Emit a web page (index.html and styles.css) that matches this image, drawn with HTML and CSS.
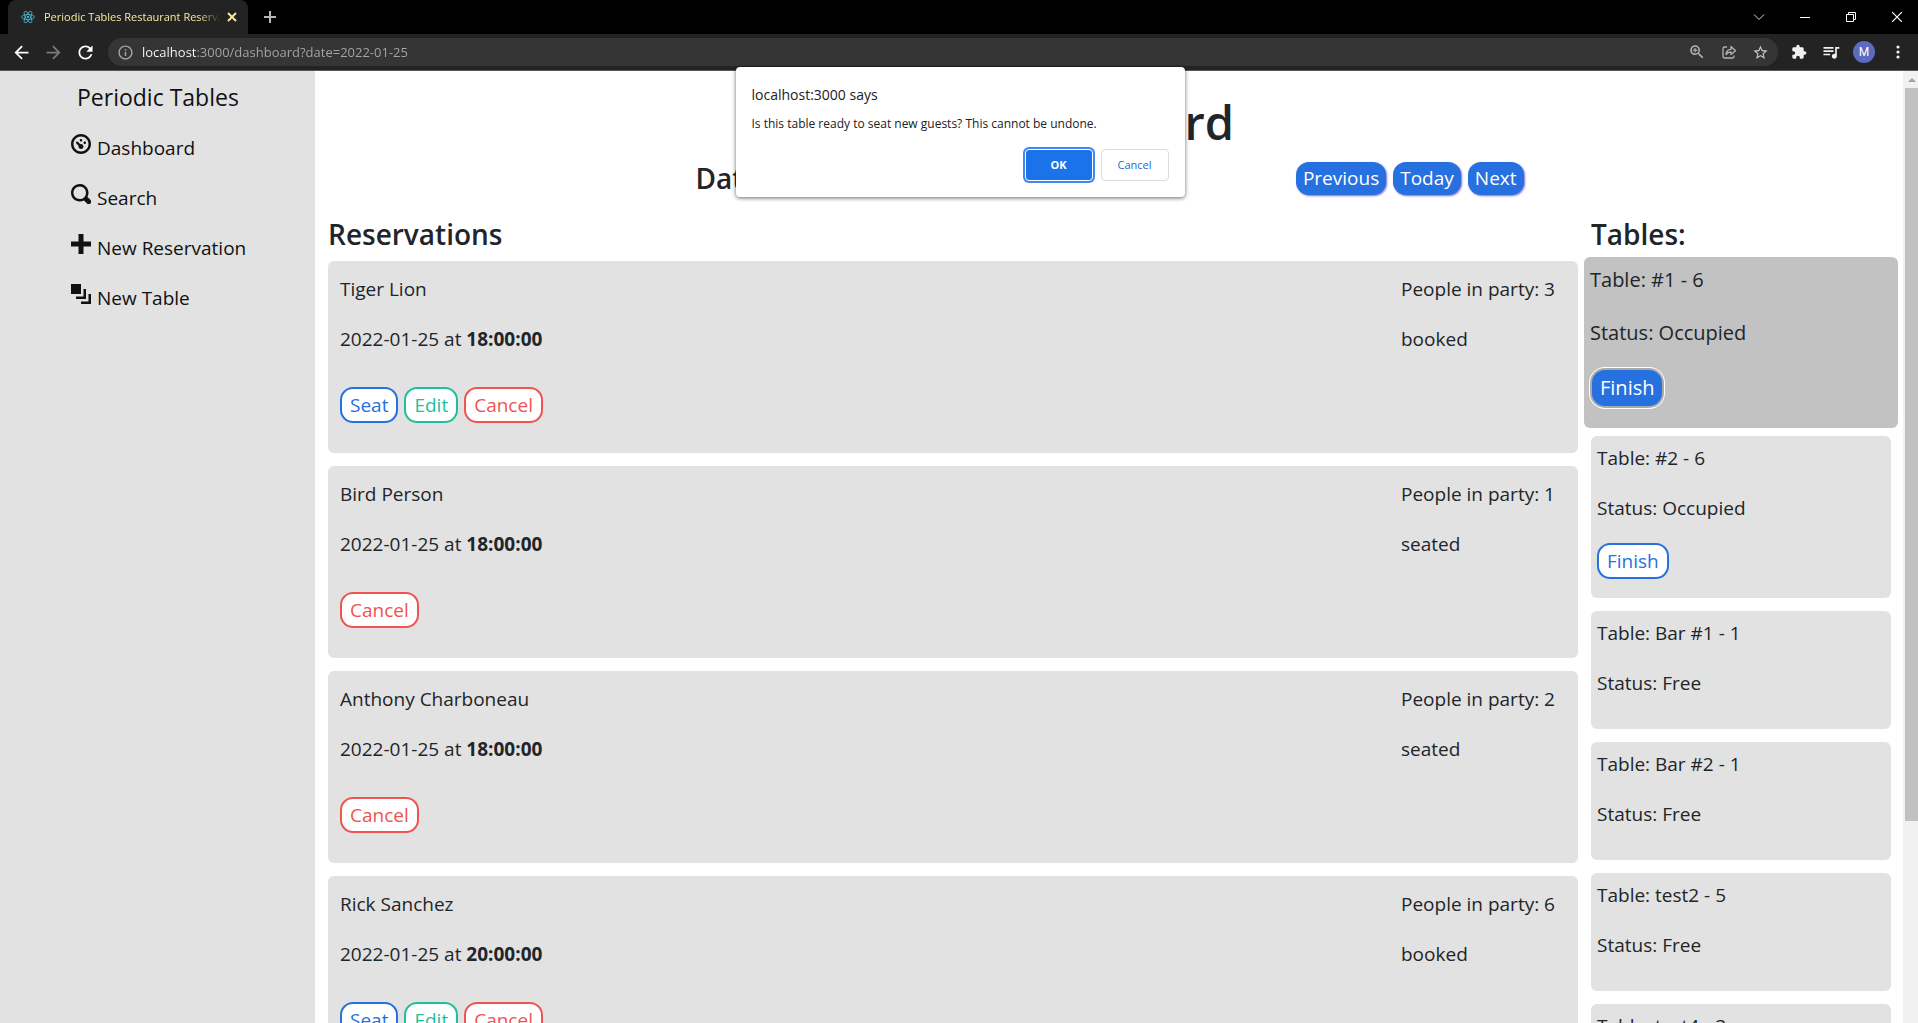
FILE: index.html
```html
<!DOCTYPE html>
<html lang="en">
<head>
<meta charset="utf-8">
<title>Periodic Tables Restaurant Reservation</title>
<link rel="stylesheet" href="styles.css">
</head>
<body>
<header class="browser">
  <div class="tabstrip">
    <div class="tab">
      <svg class="react" viewBox="0 0 24 24" fill="none" stroke="#4db8d4" stroke-width="1.4"><ellipse cx="12" cy="12" rx="11" ry="4.3"/><ellipse cx="12" cy="12" rx="11" ry="4.3" transform="rotate(60 12 12)"/><ellipse cx="12" cy="12" rx="11" ry="4.3" transform="rotate(120 12 12)"/><circle cx="12" cy="12" r="2" fill="#4db8d4" stroke="none"/></svg>
      <span class="tab-title">Periodic Tables Restaurant Reservation</span>
      <button class="icon-btn tab-close" aria-label="Close tab"><svg viewBox="0 0 10 10" width="10" height="10" fill="none" stroke="#f5ea9c" stroke-width="2"><path d="M1 1l8 8M9 1l-8 8"/></svg></button>
    </div>
    <button class="icon-btn new-tab" aria-label="New tab"><svg viewBox="0 0 12 12" width="12" height="12" fill="none" stroke="#b4b7ba" stroke-width="2"><path d="M6 0v12M0 6h12"/></svg></button>
    <div class="window-controls">
      <button class="icon-btn" aria-label="Search tabs"><svg viewBox="0 0 12 12" width="12" height="12" fill="none" stroke="#ddd"><path d="M1 3.500l5 5 5-5"/></svg></button>
      <button class="icon-btn" aria-label="Minimize"><svg viewBox="0 0 10 10" width="10" height="10" stroke="#fff"><path d="M0 5.500h10"/></svg></button>
      <button class="icon-btn" aria-label="Restore"><svg viewBox="0 0 10 10" width="10" height="10" fill="none" stroke="#fff"><path d="M.5 2.500h7v7h-7zM2.500 2.500v-2h7v7h-2"/></svg></button>
      <button class="icon-btn" aria-label="Close"><svg viewBox="0 0 10 10" width="10" height="10" stroke="#fff" stroke-width="1.200"><path d="M0 0l10 10M10 0L0 10"/></svg></button>
    </div>
  </div>
  <div class="toolbar">
    <button class="icon-btn" aria-label="Back"><svg viewBox="0 0 24 24" width="21" height="21" fill="#fff"><path d="M20 11H7.830l5.590-5.590L12 4l-8 8 8 8 1.410-1.410L7.830 13H20v-2z"/></svg></button>
    <button class="icon-btn" aria-label="Forward"><svg viewBox="0 0 24 24" width="21" height="21" fill="#7b7b7b"><path d="M12 4l-1.410 1.410L16.170 11H4v2h12.170l-5.580 5.590L12 20l8-8z"/></svg></button>
    <button class="icon-btn" aria-label="Reload"><svg viewBox="0 0 24 24" width="21" height="21" fill="#fff"><path d="M17.650 6.350C16.200 4.900 14.210 4 12 4c-4.420 0-7.990 3.580-7.990 8s3.570 8 7.990 8c3.730 0 6.840-2.550 7.730-6h-2.080c-.82 2.330-3.040 4-5.650 4-3.310 0-6-2.690-6-6s2.690-6 6-6c1.660 0 3.140.69 4.220 1.780L13 11h7V4l-2.350 2.350z"/></svg></button>
    <div class="omnibox">
      <svg viewBox="0 0 24 24" width="17" height="17" fill="#a4a7aa"><path d="M11 7h2v2h-2zm0 4h2v6h-2zm1-9C6.480 2 2 6.480 2 12s4.480 10 10 10 10-4.480 10-10S17.520 2 12 2zm0 18c-4.410 0-8-3.590-8-8s3.590-8 8-8 8 3.590 8 8-3.590 8-8 8z"/></svg>
      <input class="url" type="text" aria-label="Address" value="localhost:3000/dashboard?date=2022-01-25">
      <button class="icon-btn" aria-label="Zoom"><svg viewBox="0 0 24 24" width="18" height="18" fill="#b4b4b4"><path d="M15.500 14h-.79l-.28-.27C15.410 12.590 16 11.110 16 9.500 16 5.910 13.090 3 9.500 3S3 5.910 3 9.500 5.910 16 9.500 16c1.610 0 3.090-.59 4.230-1.570l.27.28v.79l5 4.990L20.490 19l-4.990-5zm-6 0C7.010 14 5 11.990 5 9.500S7.010 5 9.500 5 14 7.010 14 9.500 11.990 14 9.500 14zM10.200 6.500H8.800v2.300H6.500v1.400h2.300v2.300h1.400v-2.300h2.300V8.800h-2.300z"/></svg></button>
      <button class="icon-btn" aria-label="Share"><svg viewBox="0 0 16 16" width="16" height="16" fill="none" stroke="#b4b4b4" stroke-width="1.300" stroke-linejoin="round"><path d="M6 3H3.500Q2 3 2 4.500V12.500Q2 14 3.500 14H11.500Q13 14 13 12.500V11.500M5 10.500Q5.500 5.500 10 5.300V2.500L14.500 6.800L10 10.500V8Q7 8 5 10.500z"/></svg></button>
      <button class="icon-btn" aria-label="Bookmark"><svg viewBox="0 0 24 24" width="17" height="17" fill="#c8c8c8"><path d="M22 9.240l-7.190-.62L12 2 9.190 8.630 2 9.240l5.460 4.730L5.820 21 12 17.270 18.180 21l-1.630-7.030L22 9.240zM12 15.400l-3.760 2.270 1-4.280-3.320-2.880 4.380-.38L12 6.100l1.710 4.040 4.380.38-3.320 2.880 1 4.280L12 15.400z"/></svg></button>
    </div>
    <div class="extensions">
      <button class="icon-btn" aria-label="Extensions"><svg viewBox="0 0 24 24" width="16" height="16" fill="#f1f1f1"><path d="M20.500 11H19V7c0-1.100-.9-2-2-2h-4V3.500C13 2.120 11.880 1 10.500 1S8 2.120 8 3.500V5H4c-1.100 0-1.990.9-1.990 2v3.800H3.500c1.490 0 2.700 1.210 2.700 2.700s-1.210 2.700-2.700 2.700H2V20c0 1.100.9 2 2 2h3.800v-1.500c0-1.490 1.210-2.700 2.700-2.700 1.490 0 2.700 1.210 2.700 2.700V22H17c1.100 0 2-.9 2-2v-4h1.500c1.380 0 2.500-1.120 2.500-2.500S21.880 11 20.500 11z"/></svg></button>
      <button class="icon-btn" aria-label="Media"><svg viewBox="0 0 24 24" width="20" height="20" fill="#f1f1f1"><path d="M15 6H3v2h12V6zm0 4H3v2h12v-2zM3 16h8v-2H3v2zM17 6v8.180c-.31-.11-.65-.18-1-.18-1.660 0-3 1.340-3 3s1.340 3 3 3 3-1.340 3-3V8h3V6h-5z"/></svg></button>
      <button class="icon-btn avatar" aria-label="Profile">M</button>
      <button class="icon-btn" aria-label="Menu"><svg viewBox="0 0 4 14" width="4" height="14" fill="#f1f1f1"><circle cx="2" cy="2" r="1.600"/><circle cx="2" cy="7" r="1.600"/><circle cx="2" cy="12" r="1.600"/></svg></button>
    </div>
  </div>
</header>

<div class="page">
  <nav class="sidebar">
    <a class="brand" href="#">Periodic Tables</a>
    <ul class="menu">
      <li><a href="#"><svg class="oi" viewBox="0 0 8 8"><path d="M4 0c-2.200 0-4 1.800-4 4s1.800 4 4 4 4-1.800 4-4-1.800-4-4-4zm0 1c1.660 0 3 1.340 3 3s-1.340 3-3 3-3-1.340-3-3 1.340-3 3-3zm0 1c-.28 0-.5.22-.5.5s.22.5.5.5.5-.22.5-.5-.22-.5-.5-.5zm-1.660 1a.5.5 0 0 0-.19.84l.91.91c-.02.08-.06.16-.06.25 0 .55.45 1 1 1s1-.45 1-1-.45-1-1-1c-.09 0-.17.04-.25.06l-.91-.91a.5.5 0 0 0-.44-.16.5.5 0 0 0-.06 0zm3.160 0c-.28 0-.5.22-.5.5s.22.5.5.5.5-.22.5-.5-.22-.5-.5-.5z"/></svg><span>Dashboard</span></a></li>
      <li><a href="#"><svg class="oi" viewBox="0 0 8 8"><path d="M3.500 0c-1.930 0-3.500 1.570-3.500 3.500s1.570 3.500 3.500 3.500c.59 0 1.170-.14 1.660-.41a1 1 0 0 0 .13.13l1 1a1.020 1.020 0 1 0 1.440-1.440l-1-1a1 1 0 0 0-.16-.13c.27-.49.44-1.060.44-1.660 0-1.930-1.550-3.500-3.500-3.500zm0 1c1.390 0 2.500 1.110 2.500 2.500 0 .66-.24 1.270-.66 1.720-.01.01-.02.02-.03.03a1 1 0 0 0-.13.13c-.44.4-1.040.63-1.690.63-1.390 0-2.500-1.110-2.500-2.500s1.110-2.500 2.500-2.500z"/></svg><span>Search</span></a></li>
      <li><a href="#"><svg class="oi" viewBox="0 0 8 8"><path d="M3 0v3h-3v2h3v3h2v-3h3v-2h-3v-3h-2z"/></svg><span>New Reservation</span></a></li>
      <li><a href="#"><svg class="oi" viewBox="0 0 8 8"><path d="M0 0v4h4v-4h-4zm5 2v3h-3v1h4v-4h-1zm2 2v3h-3v1h4v-4h-1z"/></svg><span>New Table</span></a></li>
    </ul>
  </nav>

  <main class="content">
    <h1>Dashboard</h1>
    <div class="date-row">
      <h2>Date: 2022-01-25</h2>
      <div class="pager">
        <button class="nav-btn">Previous</button>
        <button class="nav-btn">Today</button>
        <button class="nav-btn">Next</button>
      </div>
    </div>
    <div class="columns">
      <section class="list">
        <h2>Reservations</h2>
        <article class="card reservation">
          <p>Tiger Lion</p><p>People in party: 3</p>
          <p>2022-01-25 at <b>18:00:00</b></p><p>booked</p>
          <div class="actions"><button class="btn blue">Seat</button><button class="btn green">Edit</button><button class="btn red">Cancel</button></div>
        </article>
        <article class="card reservation">
          <p>Bird Person</p><p>People in party: 1</p>
          <p>2022-01-25 at <b>18:00:00</b></p><p>seated</p>
          <div class="actions"><button class="btn red">Cancel</button></div>
        </article>
        <article class="card reservation">
          <p>Anthony Charboneau</p><p>People in party: 2</p>
          <p>2022-01-25 at <b>18:00:00</b></p><p>seated</p>
          <div class="actions"><button class="btn red">Cancel</button></div>
        </article>
        <article class="card reservation">
          <p>Rick Sanchez</p><p>People in party: 6</p>
          <p>2022-01-25 at <b>20:00:00</b></p><p>booked</p>
          <div class="actions"><button class="btn blue">Seat</button><button class="btn green">Edit</button><button class="btn red">Cancel</button></div>
        </article>
      </section>
      <section class="list">
        <h2>Tables:</h2>
        <article class="card table-card active">
          <p>Table: #1 - 6</p><p>Status: Occupied</p>
          <button class="btn blue pressed">Finish</button>
        </article>
        <article class="card table-card">
          <p>Table: #2 - 6</p><p>Status: Occupied</p>
          <button class="btn blue">Finish</button>
        </article>
        <article class="card table-card"><p>Table: Bar #1 - 1</p><p>Status: Free</p></article>
        <article class="card table-card"><p>Table: Bar #2 - 1</p><p>Status: Free</p></article>
        <article class="card table-card"><p>Table: test2 - 5</p><p>Status: Free</p></article>
        <article class="card table-card"><p>Table: test4 - 3</p><p>Status: Free</p></article>
      </section>
    </div>
  </main>
  <div class="scrollbar" aria-hidden="true"><span class="arrow"></span><span class="thumb"></span></div>
</div>

<dialog class="alert" open>
  <h3>localhost:3000 says</h3>
  <p>Is this table ready to seat new guests? This cannot be undone.</p>
  <div class="alert-actions">
    <button class="dlg-btn ok">OK</button>
    <button class="dlg-btn">Cancel</button>
  </div>
</dialog>
</body>
</html>
```
FILE: styles.css
```css
* { box-sizing: border-box; }
body {
  margin: 0;
  height: 100vh;
  display: flex;
  flex-direction: column;
  overflow: hidden;
  background: #fff;
  color: #212529;
  font: 19px/30px "Open Sans", "Noto Sans", sans-serif;
}
h1, h2, h3, p, ul { margin: 0; padding: 0; }
button { font: inherit; cursor: pointer; }
svg { display: block; flex: none; }

/* Browser frame */
.browser { background: #232323; border-bottom: 1px solid #5a5759; flex: none; }
.tabstrip { display: flex; align-items: center; height: 34px; padding-left: 8px; background: #000; }
.tab {
  display: flex;
  align-items: center;
  align-self: stretch;
  width: 240px;
  padding: 0 10px 0 13px;
  background: #232323;
  border-radius: 8px 8px 0 0;
}
.react { width: 14px; height: 14px; margin-right: 9px; }
.tab-title {
  flex: 1;
  overflow: hidden;
  white-space: nowrap;
  font-size: 11px;
  color: #f5ea9c;
  -webkit-mask-image: linear-gradient(90deg, #000 88%, transparent);
  mask-image: linear-gradient(90deg, #000 88%, transparent);
}
.icon-btn {
  display: flex;
  align-items: center;
  justify-content: center;
  padding: 0;
  border: 0;
  background: none;
}
.tab-close { width: 12px; margin-left: 6px; }
.new-tab { width: 28px; margin-left: 8px; }
.window-controls { display: flex; margin-left: auto; }
.window-controls .icon-btn { width: 46px; height: 28px; }
.window-controls .icon-btn:last-child { margin-right: -2px; }
.toolbar { display: flex; align-items: center; height: 36px; padding: 0 10px; }
.toolbar > .icon-btn { width: 22px; margin-right: 10px; }
.omnibox {
  display: flex;
  align-items: center;
  gap: 15px;
  flex: 1;
  height: 28px;
  margin-left: 2px;
  padding: 0 9px;
  background: #353535;
  border-radius: 14px;
}
.url {
  flex: 1;
  min-width: 0;
  margin-left: -7px;
  padding: 0;
  border: 0;
  outline: 0;
  font: 13px/20px "Open Sans", "Noto Sans", sans-serif;
  color: transparent;
  background: linear-gradient(90deg, #fff 55px, #a4a7aa 55px);
  -webkit-background-clip: text;
  background-clip: text;
}
.extensions { display: flex; align-items: center; gap: 12px; margin-left: 11px; }
.extensions .icon-btn { min-width: 20px; }
.extensions .icon-btn:last-child { min-width: 22px; margin-right: -1px; }
.extensions .avatar {
  width: 22px;
  height: 22px;
  border-radius: 50%;
  background: #5c6bc0;
  color: #fff;
  font: 12px/22px Roboto, sans-serif;
}

/* Page */
.page { display: flex; flex: 1; min-height: 0; }
.sidebar { width: 315px; flex: none; padding: 8px 12px 0 71px; background: #e2e2e2; overflow: hidden; }
.sidebar a { color: #111; text-decoration: none; }
.brand { display: block; padding-left: 6px; font-size: 23px; line-height: 36px; }
.menu { list-style: none; padding-top: 13px; }
.menu a { display: flex; gap: 6px; height: 50px; padding-top: 6px; }
.menu span { margin-top: -1px; }
.oi { width: 20px; height: 20px; fill: #111; }
.content { flex: 1; min-width: 0; padding: 21px 12px 0 13px; overflow: hidden; }
h1 { text-align: center; font-size: 47px; line-height: 60px; font-weight: 600; }
h2 { font-size: 28px; line-height: 36px; font-weight: 600; }
.date-row { display: flex; justify-content: space-evenly; align-items: center; column-gap: 8px; padding-top: 8px; }
.pager { display: flex; gap: 7px; }
.nav-btn {
  height: 33px;
  padding: 0 7px;
  border: 0;
  border-radius: 13px;
  background: #2770e0;
  color: #fff;
  box-shadow: 1px 1px 2px #7b68ee;
}
.columns { display: grid; grid-template-columns: 25fr 6fr; gap: 13px; padding-top: 20px; }
.list { display: flex; flex-direction: column; gap: 13px; }
.list h2 { margin-bottom: -4px; }
.card { border-radius: 6px; background: #e2e2e2; }
.reservation {
  display: grid;
  grid-template-columns: 1fr 165px;
  row-gap: 20px;
  padding: 13px 12px 30px;
}
.actions { display: flex; gap: 6px; grid-column: 1 / -1; margin-top: 13px; }
.btn {
  height: 36px;
  padding: 0 8px;
  border: 2px solid;
  border-radius: 13px;
  background: #fff;
  line-height: 32px;
}
.blue { color: #2770e0; }
.green { color: #20bf9b; }
.red { color: #f05452; }
.table-card {
  display: flex;
  flex-direction: column;
  align-items: flex-start;
  gap: 20px;
  padding: 7px 6px 31px;
}
.table-card:has(.btn) { padding-bottom: 19px; }
.active {
  gap: 21px;
  margin: -4px -7px -5px;
  background: #c2c2c2;
  font-size: 20px;
  line-height: 32px;
}
.active:has(.btn) { padding-bottom: 22px; }
.pressed {
  margin-left: 2px;
  border: 0;
  background: #2770e0;
  color: #fff;
  box-shadow: 0 0 0 2px #aaa, 0 0 0 3px #fff;
}
.scrollbar { width: 15px; flex: none; padding-left: 2px; background: #f1f1f1; }
.arrow {
  display: block;
  width: 0;
  margin: 7px 3px 6px;
  border: 4px solid transparent;
  border-top-width: 0;
  border-bottom-color: #a3a3a3;
}
.thumb { display: block; height: 77%; background: #c1c1c1; }

/* JavaScript confirm box */
.alert {
  position: absolute;
  top: 67px;
  left: 2px;
  right: 0;
  width: 449px;
  margin: 0 auto;
  padding: 17px 16px 16px;
  border: 0;
  border-radius: 4px;
  background: #fff;
  color: #202124;
  box-shadow: 0 1px 4px rgba(0, 0, 0, .6);
}
.alert h3 { font-size: 14px; line-height: 22px; font-weight: 400; }
.alert p { padding-top: 8px; font-size: 12px; line-height: 20px; }
.alert-actions { display: flex; justify-content: flex-end; gap: 8px; padding-top: 15px; }
.dlg-btn {
  width: 68px;
  height: 32px;
  border: 1px solid #dadce0;
  border-radius: 4px;
  background: #fff;
  color: #1a67d8;
  font-size: 11px;
  line-height: 16px;
}
.ok { border-color: #fff; background: #1a73e8; color: #fff; font-weight: 700; box-shadow: 0 0 0 2px #4285f4; }
```
